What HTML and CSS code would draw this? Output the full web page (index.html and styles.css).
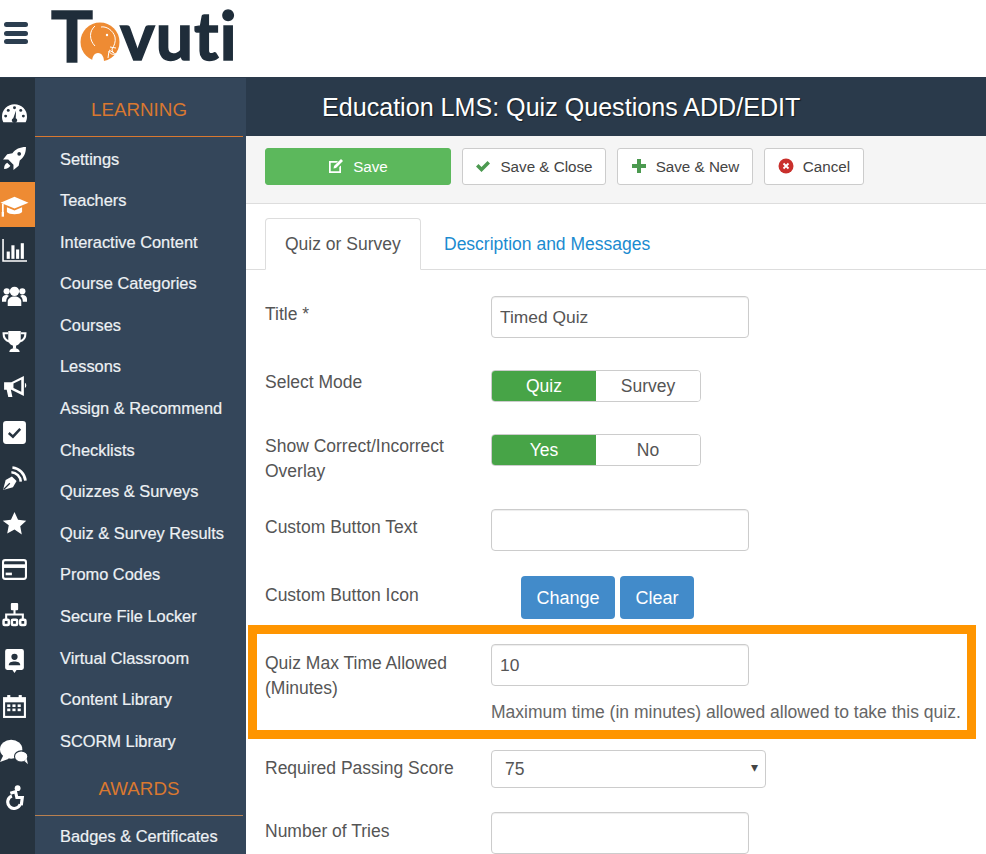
FILE: index.html
```html
<!DOCTYPE html>
<html lang="en">
<head>
<meta charset="utf-8">
<title>Education LMS: Quiz Questions ADD/EDIT</title>
<link rel="stylesheet" href="styles.css">
</head>
<body>
<header class="topbar">
  <button class="burger" aria-label="Menu"><span></span><span></span><span></span></button>
  <div class="logo">
    <span class="logo-t">T</span>
    <svg class="logo-mark" viewBox="0 0 40 40" aria-hidden="true">
      <circle cx="20" cy="20" r="19.5" fill="#ee8b33"/>
      <path d="M15 4C9 9 9 18 15 24" fill="none" stroke="#fff" stroke-width="1"/>
      <path d="M21 5c5-1 12 3 14 10 1 5-1 9-3 12 0 3 2 5 4 5-3 1-6 0-7-3l-1 7" fill="none" stroke="#fff" stroke-width="1"/>
      <path d="M12 40c0-5 2-9 6-9s6 4 6 9z" fill="#fff"/>
      <path d="M30 25l6 1M29 28l5 3" stroke="#fff" stroke-width="1"/>
      <circle cx="27" cy="13" r="1.2" fill="#fff"/>
    </svg>
    <span class="logo-rest">vuti</span>
  </div>
</header>
<div class="shell">
  <nav class="rail">
    <a class="rail-item"><svg viewBox="0 0 24 24"><path d="M12 3A12 12 0 0 0 0 15c0 2 .5 3.700 1.300 5.500h21.400c.8-1.800 1.300-3.500 1.300-5.500A12 12 0 0 0 12 3z" fill="#fff"/><g fill="#26333f"><circle cx="12" cy="6.500" r="1.400"/><circle cx="6" cy="9" r="1.400"/><circle cx="18" cy="9" r="1.400"/><circle cx="3.500" cy="14.500" r="1.400"/><circle cx="20.500" cy="14.500" r="1.400"/><path d="M13.500 9l-.3 7.500a2.400 2.400 0 1 1-2.400 0z"/></g></svg></a>
    <a class="rail-item"><svg viewBox="0 0 24 24"><path d="M23 1c-6 0-10 2-13 6L5 8l-4 5 5 0 5 5 0 5 5-4 1-5c4-3 6-7 6-13zM2 22c0-3 1-5 3-6l3 3c-1 2-3 3-6 3z" fill="#fff"/><circle cx="16.500" cy="7.500" r="1.800" fill="#26333f"/></svg></a>
    <a class="rail-item is-active"><svg class="rail-wide" viewBox="0 0 24 24"><path d="M12 5L0 10l12 5 12-5z" fill="#fff"/><path d="M5.500 14v4c2 2.500 11 2.500 13 0v-4l-6.500 2.700z" fill="#fff"/><path d="M2 11v8" stroke="#fff" stroke-width="1.500"/><rect x="1" y="18" width="2" height="4" fill="#fff"/></svg></a>
    <a class="rail-item"><svg viewBox="0 0 24 24"><path d="M1 1v21h23" fill="none" stroke="#fff" stroke-width="1.500"/><g fill="#fff"><rect x="4.500" y="13" width="3" height="7"/><rect x="9" y="7" width="3" height="13"/><rect x="13.500" y="11" width="3" height="9"/><rect x="18" y="5" width="3" height="15"/></g></svg></a>
    <a class="rail-item"><svg viewBox="0 0 24 24" fill="#fff"><circle cx="12" cy="8" r="4.500"/><path d="M5.500 22v-4c0-3 3-5 6.500-5s6.500 2 6.500 5v4z"/><circle cx="4.500" cy="8" r="3"/><circle cx="19.500" cy="8" r="3"/><path d="M0 18v-3c0-2 2-3.500 4-3.500 1 0 2 .3 2.500 1-1.500 1-2.500 2.700-2.500 5.500zM24 18v-3c0-2-2-3.500-4-3.500-1 0-2 .3-2.500 1 1.500 1 2.500 2.700 2.500 5.500z"/></svg></a>
    <a class="rail-item"><svg viewBox="0 0 24 24" fill="#fff"><path d="M6 2h12v8c0 3.500-2.500 6-6 6s-6-2.500-6-6z"/><path d="M6 4H1.500c0 4.500 2 7 5.500 8M18 4h4.500c0 4.500-2 7-5.500 8" fill="none" stroke="#fff" stroke-width="2"/><rect x="10.500" y="15" width="3" height="4"/><path d="M7 22c0-2 2-3.500 5-3.500s5 1.500 5 3.500z"/></svg></a>
    <a class="rail-item"><svg viewBox="0 0 24 24" fill="#fff"><path d="M21 2L9 8H2v7h2.500l1.500 7h4l-1.500-7H9l12 6zM22 8.500a3 3 0 0 1 0 5z"/><path d="M18.500 5.500L11 9v4.500l7.500 3.500z" fill="#26333f"/></svg></a>
    <a class="rail-item"><svg viewBox="0 0 24 24"><rect x="1" y="1" width="22" height="22" rx="3" fill="#fff"/><path d="M6.500 12.500l4 3.500 7-7.500" fill="none" stroke="#26333f" stroke-width="2.400"/></svg></a>
    <a class="rail-item"><svg viewBox="0 0 24 24"><path d="M1 23l2.500-9.500 6-3.500 4.500 4.500-3.500 6z" fill="#fff"/><path d="M1.500 22.500l6-6" stroke="#26333f" stroke-width="1.200"/><path d="M9 6a9.500 9.500 0 0 1 9 9M10 1.500a14 14 0 0 1 12.500 12.500" fill="none" stroke="#fff" stroke-width="2.500"/></svg></a>
    <a class="rail-item"><svg viewBox="0 0 24 24"><path d="M12 1l3.400 7.300 7.900 1-5.800 5.400 1.500 7.900L12 17.800l-7 3.800 1.500-7.900L.7 9.300l7.900-1z" fill="#fff"/></svg></a>
    <a class="rail-item"><svg viewBox="0 0 24 24"><rect x="1" y="3" width="22" height="18" rx="2" fill="none" stroke="#fff" stroke-width="2"/><rect x="1" y="7" width="22" height="3.500" fill="#fff"/><rect x="3.500" y="15" width="6" height="2.500" fill="#fff"/></svg></a>
    <a class="rail-item"><svg viewBox="0 0 24 24"><rect x="8.500" y="1" width="7" height="7" rx="1" fill="#fff"/><path d="M12 7v5M4 17v-5h16v5" fill="none" stroke="#fff" stroke-width="2"/><g fill="none" stroke="#fff" stroke-width="2.400"><rect x="1.500" y="17" width="5" height="5" rx="1"/><rect x="9.500" y="17" width="5" height="5" rx="1"/><rect x="17.500" y="17" width="5" height="5" rx="1"/></g></svg></a>
    <a class="rail-item"><svg viewBox="0 0 24 24"><path d="M5 1h14a2 2 0 0 1 2 2v16a2 2 0 0 1-2 2h-5l-2 3-2-3H5a2 2 0 0 1-2-2V3a2 2 0 0 1 2-2z" fill="#fff"/><circle cx="12" cy="8.500" r="3" fill="#26333f"/><path d="M6.500 16.500c0-2.500 2.500-3.500 5.500-3.500s5.500 1 5.500 3.500z" fill="#26333f"/></svg></a>
    <a class="rail-item"><svg viewBox="0 0 24 24"><rect x="1" y="3" width="22" height="20" fill="#fff"/><rect x="5" y="1" width="3" height="4" fill="#fff"/><rect x="16" y="1" width="3" height="4" fill="#fff"/><rect x="3" y="8" width="18" height="13" fill="#26333f"/><g fill="#fff"><rect x="5" y="10" width="3" height="2.500"/><rect x="10" y="10" width="3" height="2.500"/><rect x="15" y="10" width="3" height="2.500"/><rect x="5" y="14" width="3" height="2.500"/><rect x="10" y="14" width="3" height="2.500"/><rect x="15" y="14" width="3" height="2.500"/></g></svg></a>
    <a class="rail-item"><svg class="rail-wide" viewBox="0 0 26 24" fill="#fff"><ellipse cx="10" cy="9.500" rx="10" ry="8.500"/><path d="M3 15l-3 6 8-3z"/><ellipse cx="19" cy="16" rx="6" ry="5" stroke="#26333f" stroke-width="1"/><path d="M22 20l3 3-1-5z"/></svg></a>
    <a class="rail-item"><svg viewBox="0 0 24 24"><circle cx="15" cy="3" r="2.800" fill="#fff"/><path d="M8 8l5-1.500 1.500 6.500M13.500 12h6l-1 7.500" fill="none" stroke="#fff" stroke-width="3"/><path d="M9.500 10.500a6.200 6.200 0 1 0 8 8" fill="none" stroke="#fff" stroke-width="3"/></svg></a>
  </nav>
  <aside class="panel">
    <h2 class="panel-head">LEARNING</h2>
    <ul class="panel-list">
      <li>Settings</li>
      <li>Teachers</li>
      <li>Interactive Content</li>
      <li>Course Categories</li>
      <li>Courses</li>
      <li>Lessons</li>
      <li>Assign &amp; Recommend</li>
      <li>Checklists</li>
      <li>Quizzes &amp; Surveys</li>
      <li>Quiz &amp; Survey Results</li>
      <li>Promo Codes</li>
      <li>Secure File Locker</li>
      <li>Virtual Classroom</li>
      <li>Content Library</li>
      <li>SCORM Library</li>
    </ul>
    <h2 class="panel-head panel-head-awards">AWARDS</h2>
    <ul class="panel-list panel-list-flush">
      <li>Badges &amp; Certificates</li>
    </ul>
  </aside>
  <main class="content">
    <h1 class="page-title">Education LMS: Quiz Questions ADD/EDIT</h1>
    <div class="toolbar">
      <button class="btn btn-save"><svg class="ico" viewBox="0 0 16 16"><path d="M1 3h9L8.500 4.700H2.700v8.600h8.600V9L13 7.500V15H1z" fill="#fff"/><path d="M6 8l7-7 2 2-7 7-2.500.5z" fill="#fff"/></svg>Save</button>
      <button class="btn btn-close"><svg class="ico" viewBox="0 0 16 16"><path d="M1 8.500l2.500-2.500 3 3L12.500 3 15 5.500 6.500 14z" fill="#4c9a50"/></svg>Save &amp; Close</button>
      <button class="btn btn-new"><svg class="ico" viewBox="0 0 16 16"><path d="M6 1h4v5h5v4h-5v5H6v-5H1V6h5z" fill="#4c9a50"/></svg>Save &amp; New</button>
      <button class="btn btn-cancel"><svg class="ico" viewBox="0 0 16 16"><circle cx="8" cy="8" r="7.500" fill="#c9302c"/><path d="M5.500 5.500l5 5M10.500 5.500l-5 5" stroke="#fff" stroke-width="1.800"/></svg>Cancel</button>
    </div>
    <div class="tabs">
      <a class="tab tab-active">Quiz or Survey</a>
      <a class="tab">Description and Messages</a>
    </div>
    <form class="form">
      <div class="row">
        <label class="label label-input">Title *</label>
        <input class="field" type="text" value="Timed Quiz">
      </div>
      <div class="row">
        <label class="label">Select Mode</label>
        <div class="toggle"><span class="opt opt-on">Quiz</span><span class="opt">Survey</span></div>
      </div>
      <div class="row row-tight">
        <label class="label">Show Correct/Incorrect Overlay</label>
        <div class="toggle"><span class="opt opt-on">Yes</span><span class="opt">No</span></div>
      </div>
      <div class="row row-tight">
        <label class="label label-input">Custom Button Text</label>
        <input class="field" type="text">
      </div>
      <div class="row row-tight">
        <label class="label label-low">Custom Button Icon</label>
        <div class="icon-actions"><button class="btn-blue btn-change" type="button">Change</button><button class="btn-blue btn-clear" type="button">Clear</button></div>
      </div>
      <div class="row row-tight">
        <label class="label label-low">Quiz Max Time Allowed (Minutes)</label>
        <div>
          <input class="field field-num" type="text" value="10">
          <p class="help">Maximum time (in minutes) allowed allowed to take this quiz.</p>
        </div>
        <div class="marker"></div>
      </div>
      <div class="row row-select">
        <label class="label label-input">Required Passing Score</label>
        <div class="select-wrap"><select class="select"><option>75</option></select></div>
      </div>
      <div class="row">
        <label class="label label-low">Number of Tries</label>
        <input class="field" type="text">
      </div>
    </form>
  </main>
</div>
</body>
</html>
```
FILE: styles.css
```css
* { box-sizing: border-box; }
html, body { margin: 0; height: 854px; overflow: hidden; }
body { font-family: "Liberation Sans", Arial, sans-serif; background: #fff; color: #555; }

.topbar { height: 77px; display: flex; align-items: flex-start; background: #fff; }
.burger { border: 0; background: none; padding: 0; margin: 22px 0 0 4px; width: 24px; display: flex; flex-direction: column; gap: 3.5px; }
.burger span { display: block; height: 5px; border-radius: 3px; background: #2c3e50; }
.logo { margin: 0 0 0 23px; display: flex; align-items: flex-start; height: 77px; font-family: Lato, sans-serif; font-weight: 700; line-height: 70px; color: #1f2d3a; -webkit-text-stroke: 1.5px #1f2d3a; }
.logo-t { font-size: 70px; letter-spacing: -13px; }
.logo-mark { width: 40px; height: 40px; margin-top: 22px; flex: none; }
.logo-rest { font-size: 66px; letter-spacing: 1px; }

.shell { display: flex; height: 777px; border-top: 1px solid #2a3a4b; }
.rail { width: 35px; flex: none; background: #26333f; padding-top: 12.6px; }
.rail-item { display: flex; height: 45.6px; align-items: center; justify-content: center; padding-right: 7px; }
.rail-item svg { width: 25px; height: 25px; flex: none; }
.rail-item .rail-wide { width: 29px; height: 28px; }
.rail-item.is-active { background: #ee8b33; }
.panel { width: 211px; flex: none; background: #34465a; color: #edf1f4; overflow: hidden; }
.panel-head { margin: 0 3px 0 0; height: 59px; padding-top: 20px; text-align: center; font-size: 18.8px; font-weight: 400; line-height: 24px; color: #d97830; border-bottom: 1px solid #d97830; }
.panel-head-awards { height: 53.5px; padding-top: 14.5px; border-bottom-color: #b98050; }
.panel-list { list-style: none; margin: 0; padding: 1.5px 0 0 25px; }
.panel-list-flush { padding-top: 0; }
.panel-list li { height: 41.6px; line-height: 41.6px; font-size: 16.4px; white-space: nowrap; -webkit-text-stroke: .2px #edf1f4; }

.content { flex: 1; min-width: 0; }
.page-title { margin: 0; height: 58px; background: #2a3a4b; color: #fff; font-size: 25.1px; font-weight: 400; line-height: 58px; padding-left: 76px; text-shadow: 1px 1px 1px rgba(0, 0, 0, .5); white-space: nowrap; }
.toolbar { height: 68px; background: #f5f5f5; border-bottom: 1px solid #ddd; padding: 12px 0 0 19px; display: flex; gap: 11px; align-items: flex-start; }
.btn { height: 37px; display: flex; align-items: center; justify-content: center; gap: 9px; border: 1px solid #ccc; border-radius: 3px; background: #fff; color: #444; font: 15.2px "Liberation Sans", Arial, sans-serif; padding: 0 0 1px; }
.ico { width: 16px; height: 16px; flex: none; }
.btn-save { width: 186px; background: #5cb85c; border-color: #5cb85c; color: #fff; }
.btn-close { width: 144px; }
.btn-new { width: 136px; }
.btn-cancel { width: 100px; }

.tabs { height: 66px; padding: 14px 0 0 19px; display: flex; border-bottom: 1px solid #ddd; }
.tab { height: 52px; padding: 0 20px; border: 1px solid transparent; line-height: 50px; font-size: 17.5px; color: #1b8bd0; white-space: nowrap; margin-right: 2px; }
.tab-active { color: #555; background: #fff; border-color: #ddd; border-bottom-color: #fff; border-radius: 4px 4px 0 0; width: 156px; padding: 0 19px; }

.form { padding: 26px 0 0 19px; }
.row { display: flex; margin-bottom: 32px; position: relative; }
.row-tight { margin-bottom: 25px; }
.row-select { margin-bottom: 24px; }
.label { width: 226px; flex: none; font-size: 17.5px; line-height: 25px; color: #555; padding-right: 30px; }
.label-input { padding-top: 6px; }
.label-low { padding-top: 7px; }
.field { width: 258px; height: 42px; border: 1px solid #ccc; border-radius: 4px; padding: 0 5px 0 8px; font: 17.4px "Liberation Sans", Arial, sans-serif; color: #555; background: #fff; display: block; box-shadow: inset 0 1px 1px rgba(0, 0, 0, .075); }
.toggle { display: flex; width: 210px; height: 32px; border: 1px solid #ccc; border-radius: 4px; overflow: hidden; }
.opt { flex: 1; text-align: center; line-height: 30px; font-size: 17.5px; color: #555; background: #fff; }
.opt-on { background: #47a447; color: #fff; flex: none; width: 104px; }
.icon-actions { display: flex; gap: 5px; margin-left: 30px; }
.btn-blue { height: 43px; border: 0; border-radius: 4px; background: #428bca; color: #fff; font: 18px "Liberation Sans", Arial, sans-serif; padding: 2px 0 0; }
.btn-change { width: 94px; }
.btn-clear { width: 74px; }
.help { margin: 13px 0 0; font-size: 17.5px; line-height: 26px; color: #666; white-space: nowrap; }
.marker { position: absolute; top: -19px; left: -17px; width: 728px; height: 114px; border: 9px solid #ff9500; pointer-events: none; }
.select-wrap { position: relative; width: 275px; }
.select-wrap::after { content: "▾"; position: absolute; top: 9px; right: 8px; font-size: 14px; color: #444; }
.select { width: 100%; height: 38px; appearance: none; -webkit-appearance: none; border: 1px solid #ccc; border-radius: 4px; background: #fff; padding: 0 13px; font: 17.5px "Liberation Sans", Arial, sans-serif; color: #555; }
```
